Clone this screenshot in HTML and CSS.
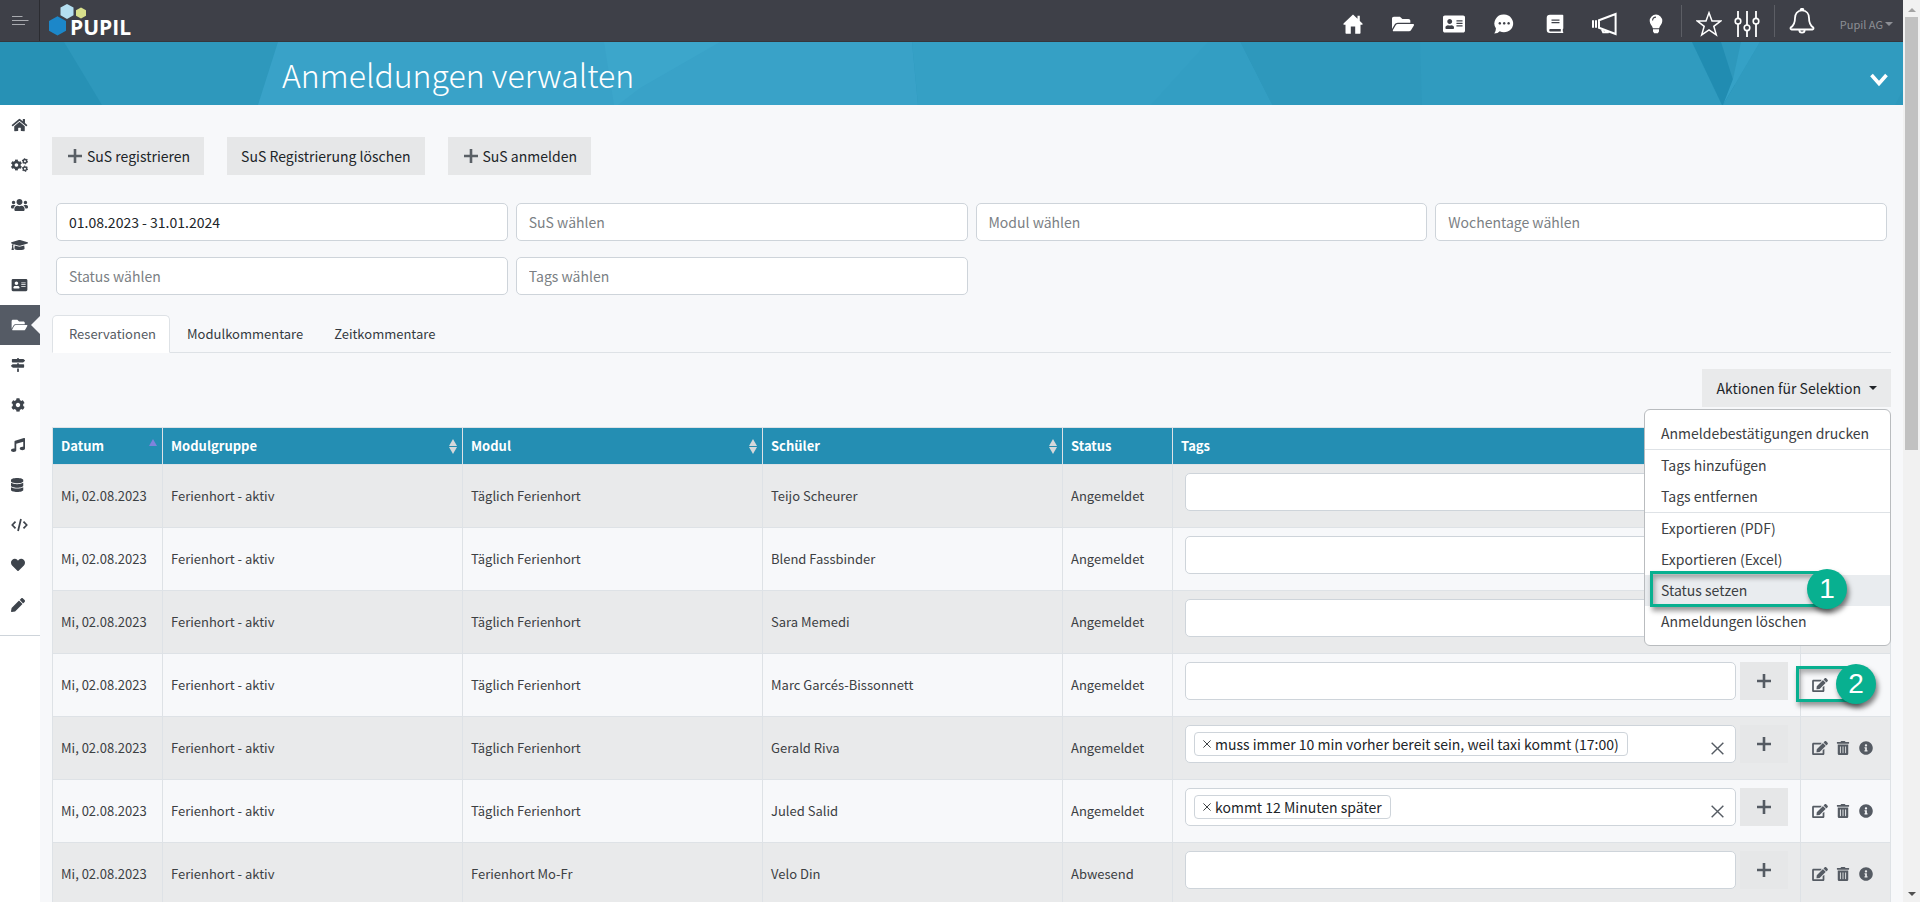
FILE: index.html
```html
<!DOCTYPE html>
<html lang="de">
<head>
    <meta charset="UTF-8">
    <meta name="viewport" content="width=device-width, initial-scale=1.0">
    <title>Anmeldungen verwalten | Pupil</title>
    <link rel="stylesheet" href="styles.css">
</head>
<body>
    <!-- Icons -->
    <svg class="sprite" aria-hidden="true">
        <symbol id="home" viewBox="0 0 576 512"><path d="M280.37 148.26L96 300.11V464a16 16 0 0 0 16 16l112.06-.29a16 16 0 0 0 15.92-16V368a16 16 0 0 1 16-16h64a16 16 0 0 1 16 16v95.64a16 16 0 0 0 16 16.05L464 480a16 16 0 0 0 16-16V300L295.67 148.26a12.19 12.19 0 0 0-15.3 0zM571.6 251.47L488 182.56V44.05a12 12 0 0 0-12-12h-56a12 12 0 0 0-12 12v72.61L318.47 43a48 48 0 0 0-61 0L4.34 251.47a12 12 0 0 0-1.6 16.9l25.5 31A12 12 0 0 0 45.15 301l235.22-193.74a12.19 12.19 0 0 1 15.3 0L530.9 301a12 12 0 0 0 16.9-1.6l25.5-31a12 12 0 0 0-1.7-16.93z"/></symbol>
        <symbol id="house" viewBox="0 0 20 20"><path d="M10 .5L.5 9.6v1.2h2V19q0 .7.7.7h4.6v-7.100h4.400v7.100h4.600q.7 0 .7-.7v-8.200h2V9.600L16.800 7V1.800h-2.300v3z"/></symbol>
        <symbol id="cog" viewBox="0 0 512 512" preserveAspectRatio="xMinYMid"><path d="M487.4 315.7l-42.6-24.6c4.3-23.2 4.3-47 0-70.2l42.6-24.6c4.9-2.8 7.1-8.6 5.5-14-11.1-35.6-30-67.8-54.7-94.6-3.8-4.1-10-5.1-14.8-2.3L380.8 110c-17.9-15.4-38.5-27.3-60.8-35.1V25.8c0-5.6-3.9-10.5-9.4-11.7-36.7-8.2-74.3-7.8-109.2 0-5.5 1.2-9.4 6.1-9.4 11.7V75c-22.2 7.9-42.8 19.8-60.8 35.1L88.7 85.5c-4.9-2.8-11-1.9-14.8 2.3-24.7 26.7-43.6 58.9-54.7 94.6-1.7 5.4.6 11.2 5.5 14L67.3 221c-4.3 23.2-4.3 47 0 70.2l-42.6 24.6c-4.9 2.8-7.1 8.6-5.5 14 11.1 35.6 30 67.8 54.7 94.6 3.8 4.1 10 5.1 14.8 2.3l42.6-24.6c17.9 15.4 38.5 27.3 60.8 35.1v49.2c0 5.6 3.9 10.5 9.4 11.7 36.7 8.2 74.3 7.8 109.2 0 5.5-1.2 9.4-6.1 9.4-11.7v-49.2c22.2-7.9 42.8-19.8 60.8-35.1l42.6 24.6c4.9 2.8 11 1.9 14.8-2.3 24.7-26.7 43.6-58.9 54.7-94.6 1.5-5.5-.7-11.3-5.6-14.1zM256 336c-44.1 0-80-35.9-80-80s35.9-80 80-80 80 35.9 80 80-35.9 80-80 80z"/></symbol>
        <symbol id="cogs" viewBox="0 0 640 512"><use href="#cog" x="-10" y="41" width="430" height="430"/><g fill="none" stroke="currentColor" stroke-width="54"><circle cx="525" cy="115" r="65"/><circle cx="525" cy="395" r="65"/></g><g fill="none" stroke="currentColor" stroke-width="40" stroke-dasharray="50 50"><circle cx="525" cy="115" r="96"/><circle cx="525" cy="395" r="96"/></g></symbol>
        <symbol id="users" viewBox="0 0 640 512"><path d="M96 224c35.3 0 64-28.7 64-64s-28.7-64-64-64-64 28.7-64 64 28.7 64 64 64zm448 0c35.3 0 64-28.7 64-64s-28.7-64-64-64-64 28.7-64 64 28.7 64 64 64zm32 32h-64c-17.6 0-33.5 7.1-45.1 18.6 40.3 22.1 68.9 62 75.1 109.4h66c17.7 0 32-14.3 32-32v-32c0-35.3-28.7-64-64-64zm-256 0c61.9 0 112-50.1 112-112S381.9 32 320 32 208 82.1 208 144s50.1 112 112 112zm76.8 32h-8.3c-20.8 10-43.9 16-68.5 16s-47.6-6-68.5-16h-8.3C179.6 288 128 339.6 128 403.2V432c0 26.5 21.5 48 48 48h288c26.5 0 48-21.5 48-48v-28.8c0-63.6-51.6-115.2-115.2-115.2zm-223.7-13.4C161.5 263.1 145.6 256 128 256H64c-35.3 0-64 28.7-64 64v32c0 17.700 14.300 32 32 32h65.900c6.300-47.400 34.900-87.300 75.200-109.400z"/></symbol>
        <symbol id="graduation" viewBox="0 0 640 512"><path d="M622.34 153.2L343.4 67.5c-15.2-4.67-31.6-4.67-46.79 0L17.66 153.2c-23.54 7.23-23.54 38.36 0 45.59l48.63 14.94c-10.67 13.19-17.23 29.28-17.88 46.9C38.78 266.15 32 276.11 32 288c0 10.78 5.68 19.85 13.86 25.65L20.33 428.53C18.11 438.52 25.71 448 35.94 448h56.11c10.24 0 17.84-9.48 15.62-19.47L82.14 313.65C90.32 307.85 96 298.78 96 288c0-11.57-6.47-21.25-15.66-26.87.76-15.02 8.44-28.3 20.69-36.72L296.6 284.5c9.06 2.78 26.44 6.25 46.79 0l278.95-85.7c23.55-7.24 23.55-38.36 0-45.6zM352.79 315.09c-28.53 8.76-52.84 3.92-65.59 0l-145.02-44.55L128 384c0 35.35 85.96 64 192 64s192-28.65 192-64l-14.18-113.47-145.03 44.56z"/></symbol>
        <symbol id="card" viewBox="0 0 576 512"><path d="M528 32H48C21.5 32 0 53.5 0 80v352c0 26.5 21.5 48 48 48h480c26.5 0 48-21.5 48-48V80c0-26.5-21.5-48-48-48zm-352 96c35.3 0 64 28.7 64 64s-28.7 64-64 64-64-28.7-64-64 28.7-64 64-64zm112 236.8c0 10.6-10 19.2-22.4 19.2H86.4C74 384 64 375.4 64 364.8v-19.2c0-31.8 30.1-57.6 67.2-57.6h5c12.3 5.1 25.7 8 39.8 8s27.6-2.9 39.8-8h5c37.1 0 67.2 25.8 67.2 57.6v19.2zM512 312c0 4.4-3.6 8-8 8H360c-4.4 0-8-3.6-8-8v-16c0-4.400 3.600-8 8-8h144c4.400 0 8 3.600 8 8v16zm0-64c0 4.400-3.600 8-8 8H360c-4.400 0-8-3.600-8-8v-16c0-4.400 3.600-8 8-8h144c4.400 0 8 3.600 8 8v16zm0-64c0 4.400-3.600 8-8 8H360c-4.400 0-8-3.600-8-8v-16c0-4.400 3.600-8 8-8h144c4.400 0 8 3.600 8 8v16z"/></symbol>
        <symbol id="folder" viewBox="0 0 576 512"><path d="M572.694 292.093L500.27 416.248A63.997 63.997 0 0 1 444.989 448H45.025c-18.523 0-30.064-20.093-20.731-36.093l72.424-124.155A64 64 0 0 1 152 256h399.964c18.523 0 30.064 20.093 20.730 36.093zM152 224h328v-48c0-26.510-21.490-48-48-48H272l-64-64H48C21.490 64 0 85.490 0 112v278.046l69.077-118.418C86.214 242.250 117.989 224 152 224z"/></symbol>
        <symbol id="signs" viewBox="0 0 512 512" preserveAspectRatio="xMinYMid"><path d="M507.31 84.69L464 41.37c-6-6-14.14-9.37-22.63-9.37H288V16c0-8.84-7.16-16-16-16h-32c-8.84 0-16 7.16-16 16v16H56c-13.25 0-24 10.75-24 24v80c0 13.25 10.75 24 24 24h385.37c8.49 0 16.62-3.37 22.63-9.37l43.31-43.31c6.25-6.26 6.25-16.38 0-22.63zM224 496c0 8.84 7.16 16 16 16h32c8.84 0 16-7.16 16-16V384h-64v112zm232-272H288v-32h-64v32H70.63c-8.49 0-16.62 3.37-22.63 9.37L4.69 276.69c-6.25 6.25-6.25 16.38 0 22.63L48 342.63c6 6 14.14 9.37 22.63 9.37H456c13.25 0 24-10.75 24-24v-80c0-13.25-10.75-24-24-24z"/></symbol>
        <symbol id="music" viewBox="0 0 512 512" preserveAspectRatio="xMinYMid"><path d="M470.38 1.51L150.41 96A32 32 0 0 0 128 126.51v261.41A139 139 0 0 0 96 384c-53 0-96 28.66-96 64s43 64 96 64 96-28.66 96-64V214.32l256-75v184.61a138.4 138.4 0 0 0-32-3.93c-53 0-96 28.66-96 64s43 64 96 64 96-28.65 96-64V32a32 32 0 0 0-41.62-30.49z"/></symbol>
        <symbol id="database" viewBox="0 0 448 512" preserveAspectRatio="xMinYMid"><path d="M448 73.143v45.714C448 159.143 347.667 192 224 192S0 159.143 0 118.857V73.143C0 32.857 100.333 0 224 0s224 32.857 224 73.143zM448 176v102.857C448 319.143 347.667 352 224 352S0 319.143 0 278.857V176c48.125 33.143 136.208 48.572 224 48.572S399.874 209.143 448 176zm0 160v102.857C448 479.143 347.667 512 224 512S0 479.143 0 438.857V336c48.125 33.143 136.208 48.572 224 48.572S399.874 369.143 448 336z"/></symbol>
        <symbol id="code" viewBox="0 0 640 512"><path d="M170 130L45 256l125 126M470 130l125 126-125 126M375 30L265 482" fill="none" stroke="currentColor" stroke-width="66" stroke-linejoin="round"/></symbol>
        <symbol id="heart" viewBox="0 0 512 512" preserveAspectRatio="xMinYMid"><path d="M462.3 62.6C407.5 15.9 326 24.3 275.7 76.2L256 96.5l-19.7-20.3C186.1 24.3 104.5 15.9 49.7 62.6c-62.8 53.6-66.1 149.8-9.9 207.9l193.5 199.8c12.5 12.9 32.8 12.9 45.3 0l193.5-199.8c56.3-58.1 53-154.3-9.8-207.9z"/></symbol>
        <symbol id="pencil" viewBox="0 0 512 512" preserveAspectRatio="xMinYMid"><path d="M497.9 142.1l-46.1 46.1c-4.7 4.7-12.3 4.7-17 0l-111-111c-4.7-4.7-4.7-12.3 0-17l46.1-46.1c18.7-18.7 49.1-18.7 67.9 0l60.1 60.1c18.8 18.7 18.8 49.1 0 67.9zM284.2 99.8L21.6 362.4.4 483.9c-2.9 16.4 11.4 30.6 27.8 27.8l121.5-21.3 262.6-262.6c4.7-4.7 4.7-12.3 0-17l-111-111c-4.8-4.7-12.4-4.7-17.1 0z"/></symbol>
        <symbol id="edit" viewBox="0 0 576 512"><path d="M402.6 83.2l90.2 90.2c3.8 3.8 3.8 10 0 13.8L274.4 405.6l-92.8 10.3c-12.4 1.4-22.9-9.1-21.5-21.5l10.3-92.8L388.8 83.2c3.8-3.8 10-3.8 13.8 0zm162-22.9l-48.8-48.8c-15.2-15.2-39.9-15.2-55.2 0l-35.4 35.4c-3.8 3.8-3.8 10 0 13.8l90.2 90.2c3.8 3.8 10 3.8 13.8 0l35.4-35.4c15.2-15.3 15.2-40 0-55.2zM384 346.2V448H64V128h229.8c3.2 0 6.2-1.3 8.5-3.5l40-40c7.6-7.6 2.2-20.5-8.5-20.5H48C21.5 64 0 85.5 0 112v352c0 26.5 21.5 48 48 48h352c26.5 0 48-21.5 48-48V306.2c0-10.7-12.9-16-20.5-8.5l-40 40c-2.2 2.300-3.500 5.300-3.500 8.500z"/></symbol>
        <symbol id="trash" viewBox="0 0 448 512"><path d="M32 464a48 48 0 0 0 48 48h288a48 48 0 0 0 48-48V128H32zm272-256a16 16 0 0 1 32 0v224a16 16 0 0 1-32 0zm-96 0a16 16 0 0 1 32 0v224a16 16 0 0 1-32 0zm-96 0a16 16 0 0 1 32 0v224a16 16 0 0 1-32 0zM432 32H312l-9.4-18.7A24 24 0 0 0 281.1 0H166.8a23.72 23.72 0 0 0-21.4 13.3L136 32H16A16 16 0 0 0 0 48v32a16 16 0 0 0 16 16h416a16 16 0 0 0 16-16V48a16 16 0 0 0-16-16z"/></symbol>
        <symbol id="info" viewBox="0 0 512 512"><path d="M256 8C119.043 8 8 119.083 8 256c0 136.997 111.043 248 248 248s248-111.003 248-248C504 119.083 392.957 8 256 8zm0 110c23.196 0 42 18.804 42 42s-18.804 42-42 42-42-18.804-42-42 18.804-42 42-42zm56 254c0 6.627-5.373 12-12 12h-88c-6.627 0-12-5.373-12-12v-24c0-6.627 5.373-12 12-12h12v-64h-12c-6.627 0-12-5.373-12-12v-24c0-6.627 5.373-12 12-12h64c6.627 0 12 5.373 12 12v100h12c6.627 0 12 5.373 12 12v24z"/></symbol>
        <symbol id="plus" viewBox="0 0 14 14"><path d="M5.700 0h2.600v5.700H14v2.600H8.300V14H5.700V8.300H0V5.700h5.700z"/></symbol>
        <symbol id="cross" viewBox="0 0 12 12"><path d="M.6.600l10.800 10.800M11.400.600L.600 11.400" fill="none" stroke="currentColor" stroke-width="1.300"/></symbol>
        <symbol id="chat" viewBox="0 0 20 20"><path fill-rule="evenodd" d="M10.300.6a9.200 8.800 0 1 1-4.600 16.600Q4 19.400.300 19.400q1.700-2 1.600-5.200A9.200 8.800 0 0 1 10.300.6zM5.800 8a1.300 1.300 0 1 0 .01 0zm4.400 0a1.300 1.300 0 1 0 .01 0zm4.400 0a1.300 1.300 0 1 0 .01 0z"/></symbol>
        <symbol id="book" viewBox="0 0 20 20"><path fill-rule="evenodd" d="M5 .8h12.500q.8 0 .8.800v12.600q0 .6-.5.800v2.600q.5.200.5.800 0 .7-.8.700H5q-3.300 0-3.300-3.300V4.100Q1.700.8 5 .8zM6.500 5.500v1.200h8V5.500zm0 2.600v1.200h8V8.100zM5.200 15q-1 0-1 1.200t1 1.200h10.600V15z"/></symbol>
        <symbol id="megaphone" viewBox="0 0 26 24"><path d="M7 8.200L23.600 2v20L7 15.800zM1 8.200v7.600M4 8.200v7.600M10 17.500l1.200 2.800h4.500v-1.500" fill="none" stroke="currentColor" stroke-width="2"/></symbol>
        <symbol id="bulb" viewBox="0 0 20 20"><path fill-rule="evenodd" d="M10 .6a6.300 6.300 0 0 1 6.300 6.300c0 3-2.400 4.400-3.200 7.300H6.900C6.100 11.300 3.700 9.900 3.700 6.900A6.300 6.300 0 0 1 10 .6zM7 15.200h6v2.200L11.800 19.300H8.200L7 17.400zM6 6.600h1.100Q7.200 3.900 10 3.700V2.600Q6.200 2.800 6 6.600z"/></symbol>
        <symbol id="star" viewBox="0 0 26 26"><path d="M13 1.800l3 8.200 8.600.1-6.800 5.200 2.500 8.600L13 18.800l-7.300 5.100 2.500-8.600L1.400 10.100 10 10z" fill="none" stroke="currentColor" stroke-width="1.500"/></symbol>
        <symbol id="sliders" viewBox="0 0 26 26"><path d="M4 0v7.500M4 13v13M13 0v14M13 19.500V26M22 0v7.500M22 13v13" stroke="currentColor" stroke-width="1.800"/><g fill="none" stroke="currentColor" stroke-width="1.600"><circle cx="4" cy="10.200" r="2.800"/><circle cx="13" cy="16.800" r="2.800"/><circle cx="22" cy="10.200" r="2.800"/></g></symbol>
        <symbol id="bell" viewBox="0 0 26 26"><path d="M13 2.400c-4.700 0-7 3.600-7 7.600 0 5.500-1.500 7.800-4.300 9.600q-.6 1.800.9 1.900h20.800q1.500-.1.900-1.900C21.500 17.800 20 15.500 20 10c0-4-2.300-7.600-7-7.600zM10.300 22a2.700 2.700 0 0 0 5.400 0M11.500 2.200a1.500 1.500 0 0 1 3 0" fill="none" stroke="currentColor" stroke-width="1.800"/></symbol>
        <symbol id="chevron" viewBox="0 0 18 14"><path d="M1.500 2L9 10.500 16.500 2" fill="none" stroke="currentColor" stroke-width="3.600"/></symbol>
        <symbol id="menu" viewBox="0 0 17 10"><path d="M0 .5h10.500M0 4.500h16.500M0 8.500h13" stroke="currentColor" stroke-width="1"/></symbol>
    </svg>

    <div class="page">
        <header class="topbar">
            <button class="menu-button" type="button" aria-label="Menü"><svg><use href="#menu"/></svg></button>
            <a class="brand" href="#">
                <svg viewBox="0 0 34 34" aria-hidden="true">
                    <path fill="#b4dff1" d="M18 0l6.500 3.600v7.600L18 15l-6.500-3.800V3.600z"/>
                    <path fill="#d8e08c" d="M32 3.500l5 2.800v5.500l-5 2.800-5-2.800V6.300z"/>
                    <path fill="#1c87c9" d="M8.500 12.300l8.500 4.800v9.600l-8.500 4.900L0 26.700v-9.600z"/>
                </svg>
                <span>PUPIL</span>
            </a>
            <nav class="topnav">
                <a href="#" aria-label="Start"><svg><use href="#house"/></svg></a>
                <a href="#" aria-label="Ordner"><svg><use href="#folder"/></svg></a>
                <a href="#" aria-label="Kontakte"><svg><use href="#card"/></svg></a>
                <a href="#" aria-label="Nachrichten"><svg><use href="#chat"/></svg></a>
                <a href="#" aria-label="Journal"><svg><use href="#book"/></svg></a>
                <a href="#" aria-label="Mitteilungen"><svg class="wide"><use href="#megaphone"/></svg></a>
                <a href="#" aria-label="Tipps"><svg><use href="#bulb"/></svg></a>
            </nav>
            <div class="toptools">
                <a href="#" aria-label="Favoriten"><svg><use href="#star"/></svg></a>
                <a href="#" aria-label="Einstellungen"><svg><use href="#sliders"/></svg></a>
            </div>
            <a class="bell" href="#" aria-label="Benachrichtigungen"><svg><use href="#bell"/></svg></a>
            <button class="account" type="button">Pupil AG<i class="caret"></i></button>
        </header>

        <div class="banner">
            <svg class="banner-bg" viewBox="0 0 1903 63" preserveAspectRatio="none" aria-hidden="true">
                <path fill="#2e98bc" d="M0 0h1903v63H0z"/>
                <path fill="#2791b5" d="M0 0h64l38 63H0z"/>
                <path fill="#39a2c8" d="M278 0h634l6 63H258z"/>
                <path fill="#3ca6cb" d="M604 0h116l-80 46-22 17h-4z"/>
                <path fill="#35a0c5" d="M912 0h328l32 63H918z"/>
                <path fill="#339ec3" d="M1208 0h32l32 63h-121z"/>
                <path fill="#309bbf" d="M1420 0h272l30 63h-300z"/>
                <path fill="#218cb1" d="M1692 0h29l20 63h-19z"/>
                <path fill="#35a1c6" d="M1741 0h19l-37 63 10-26z"/>
                <path fill="#309bbf" d="M1760 0h143v48l-8 15h-172z"/>
            </svg>
            <h1>Anmeldungen verwalten</h1>
            <button class="banner-toggle" type="button" aria-label="Aufklappen"><svg><use href="#chevron"/></svg></button>
        </div>

        <div class="body">
            <aside class="sidebar">
                <nav>
                    <a href="#" aria-label="Start"><svg><use href="#home"/></svg></a>
                    <a href="#" aria-label="Verwaltung"><svg><use href="#cogs"/></svg></a>
                    <a href="#" aria-label="Personen"><svg><use href="#users"/></svg></a>
                    <a href="#" aria-label="Schule"><svg><use href="#graduation"/></svg></a>
                    <a href="#" aria-label="Adressen"><svg><use href="#card"/></svg></a>
                    <a class="active" href="#" aria-label="Anmeldungen"><svg><use href="#folder"/></svg></a>
                    <a href="#" aria-label="Wegweiser"><svg><use href="#signs"/></svg></a>
                    <a href="#" aria-label="Einstellungen"><svg><use href="#cog"/></svg></a>
                    <a href="#" aria-label="Musik"><svg><use href="#music"/></svg></a>
                    <a href="#" aria-label="Daten"><svg><use href="#database"/></svg></a>
                    <a href="#" aria-label="Entwickler"><svg><use href="#code"/></svg></a>
                    <a href="#" aria-label="Gesundheit"><svg><use href="#heart"/></svg></a>
                    <a href="#" aria-label="Bearbeiten"><svg><use href="#pencil"/></svg></a>
                </nav>
            </aside>

            <main>
                <div class="buttons">
                    <button class="btn" type="button"><svg><use href="#plus"/></svg>SuS registrieren</button>
                    <button class="btn" type="button">SuS Registrierung löschen</button>
                    <button class="btn" type="button"><svg><use href="#plus"/></svg>SuS anmelden</button>
                </div>

                <form class="filters">
                    <input type="text" aria-label="Zeitraum" value="01.08.2023 - 31.01.2024">
                    <input type="text" aria-label="SuS" placeholder="SuS wählen">
                    <input type="text" aria-label="Modul" placeholder="Modul wählen">
                    <input type="text" aria-label="Wochentage" placeholder="Wochentage wählen">
                    <input type="text" aria-label="Status" placeholder="Status wählen">
                    <input type="text" aria-label="Tags" placeholder="Tags wählen">
                </form>

                <nav class="tabs">
                    <a class="active" href="#">Reservationen</a>
                    <a href="#">Modulkommentare</a>
                    <a href="#">Zeitkommentare</a>
                </nav>

                <div class="dropdown">
                    <button class="btn dropdown-toggle" type="button" aria-expanded="true">Aktionen für Selektion<i class="caret"></i></button>
                    <div class="dropdown-menu">
                        <a href="#">Anmeldebestätigungen drucken</a>
                        <hr>
                        <a href="#">Tags hinzufügen</a>
                        <a href="#">Tags entfernen</a>
                        <hr>
                        <a href="#">Exportieren (PDF)</a>
                        <a href="#">Exportieren (Excel)</a>
                        <a class="hover" href="#">Status setzen<span class="callout callout-menu"><b>1</b></span></a>
                        <a href="#">Anmeldungen löschen</a>
                    </div>
                </div>

                <table>
                    <colgroup>
                        <col class="col-small">
                        <col class="col-text">
                        <col class="col-text">
                        <col class="col-text">
                        <col class="col-small">
                        <col>
                        <col class="col-actions">
                    </colgroup>
                    <thead>
                        <tr>
                            <th class="sorted">Datum</th>
                            <th class="sortable">Modulgruppe</th>
                            <th class="sortable">Modul</th>
                            <th class="sortable">Schüler</th>
                            <th>Status</th>
                            <th>Tags</th>
                            <th></th>
                        </tr>
                    </thead>
                    <tbody>
                        <tr>
                            <td>Mi, 02.08.2023</td>
                            <td>Ferienhort - aktiv</td>
                            <td>Täglich Ferienhort</td>
                            <td>Teijo Scheurer</td>
                            <td>Angemeldet</td>
                            <td class="tags"><div><span class="tagbox"><input type="text" aria-label="Tags"></span><button type="button" aria-label="Tag hinzufügen"><svg><use href="#plus"/></svg></button></div></td>
                            <td></td>
                        </tr>
                        <tr>
                            <td>Mi, 02.08.2023</td>
                            <td>Ferienhort - aktiv</td>
                            <td>Täglich Ferienhort</td>
                            <td>Blend Fassbinder</td>
                            <td>Angemeldet</td>
                            <td class="tags"><div><span class="tagbox"><input type="text" aria-label="Tags"></span><button type="button" aria-label="Tag hinzufügen"><svg><use href="#plus"/></svg></button></div></td>
                            <td></td>
                        </tr>
                        <tr>
                            <td>Mi, 02.08.2023</td>
                            <td>Ferienhort - aktiv</td>
                            <td>Täglich Ferienhort</td>
                            <td>Sara Memedi</td>
                            <td>Angemeldet</td>
                            <td class="tags"><div><span class="tagbox"><input type="text" aria-label="Tags"></span><button type="button" aria-label="Tag hinzufügen"><svg><use href="#plus"/></svg></button></div></td>
                            <td></td>
                        </tr>
                        <tr>
                            <td>Mi, 02.08.2023</td>
                            <td>Ferienhort - aktiv</td>
                            <td>Täglich Ferienhort</td>
                            <td>Marc Garcés-Bissonnett</td>
                            <td>Angemeldet</td>
                            <td class="tags"><div><span class="tagbox"><input type="text" aria-label="Tags"></span><button type="button" aria-label="Tag hinzufügen"><svg><use href="#plus"/></svg></button></div></td>
                            <td class="actions"><div><a href="#" aria-label="Bearbeiten"><svg><use href="#edit"/></svg></a></div><span class="callout callout-row"><b>2</b></span></td>
                        </tr>
                        <tr>
                            <td>Mi, 02.08.2023</td>
                            <td>Ferienhort - aktiv</td>
                            <td>Täglich Ferienhort</td>
                            <td>Gerald Riva</td>
                            <td>Angemeldet</td>
                            <td class="tags"><div><span class="tagbox"><span class="tag"><svg><use href="#cross"/></svg>muss immer 10 min vorher bereit sein, weil taxi kommt (17:00)</span><input type="text" aria-label="Tags"><svg class="clear"><use href="#cross"/></svg></span><button type="button" aria-label="Tag hinzufügen"><svg><use href="#plus"/></svg></button></div></td>
                            <td class="actions"><div><a href="#" aria-label="Bearbeiten"><svg><use href="#edit"/></svg></a><a href="#" aria-label="Löschen"><svg><use href="#trash"/></svg></a><a href="#" aria-label="Info"><svg><use href="#info"/></svg></a></div></td>
                        </tr>
                        <tr>
                            <td>Mi, 02.08.2023</td>
                            <td>Ferienhort - aktiv</td>
                            <td>Täglich Ferienhort</td>
                            <td>Juled Salid</td>
                            <td>Angemeldet</td>
                            <td class="tags"><div><span class="tagbox"><span class="tag"><svg><use href="#cross"/></svg>kommt 12 Minuten später</span><input type="text" aria-label="Tags"><svg class="clear"><use href="#cross"/></svg></span><button type="button" aria-label="Tag hinzufügen"><svg><use href="#plus"/></svg></button></div></td>
                            <td class="actions"><div><a href="#" aria-label="Bearbeiten"><svg><use href="#edit"/></svg></a><a href="#" aria-label="Löschen"><svg><use href="#trash"/></svg></a><a href="#" aria-label="Info"><svg><use href="#info"/></svg></a></div></td>
                        </tr>
                        <tr>
                            <td>Mi, 02.08.2023</td>
                            <td>Ferienhort - aktiv</td>
                            <td>Ferienhort Mo-Fr</td>
                            <td>Velo Din</td>
                            <td>Abwesend</td>
                            <td class="tags"><div><span class="tagbox"><input type="text" aria-label="Tags"></span><button type="button" aria-label="Tag hinzufügen"><svg><use href="#plus"/></svg></button></div></td>
                            <td class="actions"><div><a href="#" aria-label="Bearbeiten"><svg><use href="#edit"/></svg></a><a href="#" aria-label="Löschen"><svg><use href="#trash"/></svg></a><a href="#" aria-label="Info"><svg><use href="#info"/></svg></a></div></td>
                        </tr>
                    </tbody>
                </table>
            </main>
        </div>
    </div>

    <div class="scrollbar" aria-hidden="true">
        <i class="arrow-up"></i>
        <span class="thumb"></span>
        <i class="arrow-down"></i>
    </div>
</body>
</html>
```

FILE: styles.css
```css
* {
    box-sizing: border-box;
}
body {
    display: flex;
    height: 100vh;
    margin: 0;
    overflow: hidden;
    background: #f7f8fa;
    color: #3c4043;
    font-family: "Noto Sans CJK SC", "Noto Sans", sans-serif;
    font-size: 14px;
    line-height: 20px;
}
svg {
    display: block;
    fill: currentColor;
}
a {
    color: inherit;
    text-decoration: none;
}
button,
input {
    margin: 0;
    padding: 0;
    border: 0;
    background: none;
    color: inherit;
    font: inherit;
}
.sprite {
    position: absolute;
    width: 0;
    height: 0;
}
.page {
    display: flex;
    flex: 1;
    flex-direction: column;
    min-width: 0;
}

/* top bar */
.topbar {
    display: flex;
    flex: none;
    align-items: center;
    height: 42px;
    background: #3e4048;
    border-bottom: 1px solid #35373d;
    color: #fff;
}
.menu-button {
    display: flex;
    align-items: center;
    align-self: stretch;
    width: 40px;
    padding-left: 12px;
    border-right: 1px solid #2b2c31;
    color: #a9abb0;
}
.menu-button svg {
    width: 17px;
    height: 10px;
}
.brand {
    display: flex;
    align-items: flex-end;
    height: 34px;
    margin-left: 9px;
    font: bold 21px/22px "Open Sans", sans-serif;
}
.brand svg {
    width: 34px;
    height: 34px;
    margin-right: -13px;
    overflow: visible;
}
.topnav {
    display: flex;
    justify-content: space-between;
    width: 329px;
    margin-left: auto;
    margin-right: 12px;
}
.topnav a,
.toptools a,
.bell {
    display: flex;
    align-items: center;
    justify-content: center;
}
.topnav a {
    width: 26px;
    height: 32px;
    padding-top: 6px;
}
.topnav svg {
    width: 22px;
    height: 20px;
}
.topnav .wide {
    width: 26px;
    height: 24px;
}
.toptools {
    display: flex;
    align-items: center;
    gap: 12px;
    height: 32px;
    padding: 6px 14px 0 14px;
    border: solid #5c5e65;
    border-width: 0 1px;
}
.toptools svg,
.bell svg {
    width: 26px;
    height: 26px;
}
.bell {
    height: 32px;
    margin-left: 14px;
}
.account {
    display: flex;
    align-items: center;
    gap: 2px;
    margin: 6px 10px 0 25px;
    color: #8d8f95;
    font-size: 11px;
}
.caret {
    border: 4px solid transparent;
    border-top-color: currentColor;
    border-bottom: 0;
}

/* page banner */
.banner {
    position: relative;
    display: flex;
    flex: none;
    align-items: center;
    justify-content: space-between;
    height: 63px;
    padding: 0 15px 0 282px;
    color: #fff;
}
.banner-bg {
    position: absolute;
    top: 0;
    left: 0;
    width: 100%;
    height: 100%;
}
.banner h1 {
    position: relative;
    margin: 0;
    font-size: 32px;
    font-weight: 300;
    line-height: 48px;
}
.banner-toggle {
    position: relative;
    padding-top: 12px;
}
.banner-toggle svg {
    width: 18px;
    height: 14px;
}

/* sidebar */
.body {
    display: flex;
    flex: 1;
    min-height: 0;
}
.sidebar {
    width: 40px;
    background: #fff;
    color: #3e444c;
}
.sidebar nav {
    border-bottom: 1px solid #ced4da;
    padding-bottom: 10px;
}
.sidebar a {
    display: flex;
    align-items: center;
    height: 40px;
    padding-left: 11px;
}
.sidebar svg {
    width: 17px;
    height: 14px;
}
.sidebar .active {
    position: relative;
    background: #555b65;
    color: #fff;
}
.sidebar .active::after {
    content: "";
    position: absolute;
    top: 11px;
    right: 0;
    border: 9px solid transparent;
    border-right-color: #f7f8fa;
    border-left: 0;
}

/* content */
main {
    flex: 1;
    min-width: 0;
    padding: 32px 12px 0 12px;
}
.buttons {
    display: flex;
    gap: 23px;
    margin-bottom: 28px;
}
.btn {
    display: flex;
    align-items: center;
    gap: 5px;
    height: 38px;
    padding: 0 14px;
    background: #e6e7e8;
    color: #212529;
}
.btn svg {
    width: 14px;
    height: 14px;
    margin-left: 2px;
    color: #5a6066;
}
.filters {
    display: grid;
    grid-template-columns: repeat(4, 1fr);
    gap: 16px 8px;
    padding: 0 4px;
    margin-bottom: 20px;
}
.filters input {
    min-width: 0;
    height: 38px;
    padding: 0 12px;
    border: 1px solid #ced4da;
    border-radius: 5px;
    background: #fff;
    color: #212529;
}
.filters input::placeholder {
    color: #7b7f84;
}
.tabs {
    display: flex;
    border-bottom: 1px solid #dee2e6;
    color: #343a40;
    font-size: 13px;
}
.tabs a {
    height: 38px;
    margin-bottom: -1px;
    padding: 8px 13px 8px 16px;
    border: 1px solid transparent;
    border-radius: 5px 5px 0 0;
}
.tabs .active {
    background: #fff;
    border-color: #dee2e6;
    border-bottom-color: #fff;
    color: #555b63;
}

/* actions menu */
.dropdown {
    position: relative;
    display: flex;
    justify-content: flex-end;
    margin: 16px 0 20px;
}
.dropdown-toggle {
    gap: 8px;
    background: #e9eaeb;
}
.dropdown-menu {
    position: absolute;
    z-index: 2;
    top: 40px;
    right: 0;
    width: 247px;
    padding: 8px 0;
    border: 1px solid #b9bcbf;
    border-radius: 6px;
    background: #fff;
}
.dropdown-menu a {
    position: relative;
    display: block;
    height: 31px;
    padding: 5px 16px;
    white-space: nowrap;
}
.dropdown-menu .hover {
    background: #e9ecef;
}
.dropdown-menu hr {
    height: 1px;
    margin: 0;
    border: 0;
    background: #dee2e6;
}

/* numbered hints */
.callout {
    position: absolute;
    z-index: 1;
    height: 36px;
    border: 3px solid #08b090;
    box-shadow: 2px 4px 5px rgba(0, 0, 0, 0.4), inset 2px 4px 5px rgba(0, 0, 0, 0.3);
}
.callout b {
    position: absolute;
    top: -5px;
    right: -20px;
    width: 40px;
    height: 40px;
    border-radius: 50%;
    background: #08b090;
    box-shadow: 2px 4px 5px rgba(0, 0, 0, 0.5);
    color: #fff;
    font: 28px/40px "Liberation Sans", sans-serif;
    text-align: center;
}
.callout-menu {
    top: -4px;
    left: 5px;
    width: 180px;
}
.callout-row {
    top: 12px;
    left: -5px;
    width: 63px;
}

/* reservations */
table {
    width: 100%;
    table-layout: fixed;
    border-collapse: collapse;
    font-size: 13px;
}
.col-small {
    width: 110px;
}
.col-text {
    width: 300px;
}
.col-actions {
    width: 90px;
}
th,
td {
    padding: 0 8px;
    border: 1px solid #dee2e6;
    text-align: left;
    white-space: nowrap;
}
th {
    position: relative;
    height: 37px;
    background: #248eb3;
    color: #fff;
}
td {
    height: 63px;
}
tbody tr:nth-child(odd) {
    background: #e9eaeb;
}
.sorted::before,
.sortable::before,
.sortable::after {
    content: "";
    position: absolute;
    right: 5px;
    border: 4px solid transparent;
}
.sorted::before,
.sortable::before {
    top: 11px;
    border-top: 0;
    border-bottom: 7px solid #d6d8da;
}
.sorted::before {
    border-bottom-color: #7f83dc;
}
.sortable::after {
    top: 19px;
    border-bottom: 0;
    border-top: 7px solid #d6d8da;
}
.tags {
    padding: 0 12px 8px;
}
.tags div {
    display: flex;
    gap: 4px;
}
.tagbox {
    display: flex;
    flex: 1;
    align-items: center;
    min-width: 0;
    height: 38px;
    padding: 0 11px 0 8px;
    border: 1px solid #ced4da;
    border-radius: 5px;
    background: #fff;
    font-size: 14px;
}
.tagbox input {
    flex: 1;
    min-width: 0;
}
.tag {
    display: flex;
    flex: none;
    align-items: center;
    gap: 4px;
    height: 24px;
    padding: 0 8px;
    border: 1px solid #ced4da;
    border-radius: 4px;
    color: #212529;
}
.tag svg {
    width: 8px;
    height: 8px;
}
.tagbox .clear {
    flex: none;
    width: 13px;
    height: 13px;
    margin-top: 8px;
    color: #555b63;
}
.tags button {
    display: flex;
    flex: none;
    align-items: center;
    justify-content: center;
    width: 48px;
    height: 38px;
    background: #e6e7e8;
    color: #555b63;
}
.tags button svg {
    width: 14px;
    height: 14px;
}
.actions {
    position: relative;
    padding: 0 11px;
    color: #555b63;
}
.actions div {
    display: flex;
    gap: 7px;
}
.actions svg {
    width: 16px;
    height: 14px;
}

/* scroll bar */
.scrollbar {
    display: flex;
    flex: none;
    flex-direction: column;
    align-items: center;
    width: 17px;
    padding: 8px 0 6px;
    background: #f1f1f1;
}
.arrow-up,
.arrow-down {
    border: 4px solid transparent;
}
.arrow-up {
    border-top: 0;
    border-bottom-color: #a3a3a3;
}
.arrow-down {
    margin-top: auto;
    border-bottom: 0;
    border-top-color: #505050;
}
.thumb {
    width: 13px;
    height: 48vh;
    margin-top: 5px;
    background: #c1c1c1;
}
```
